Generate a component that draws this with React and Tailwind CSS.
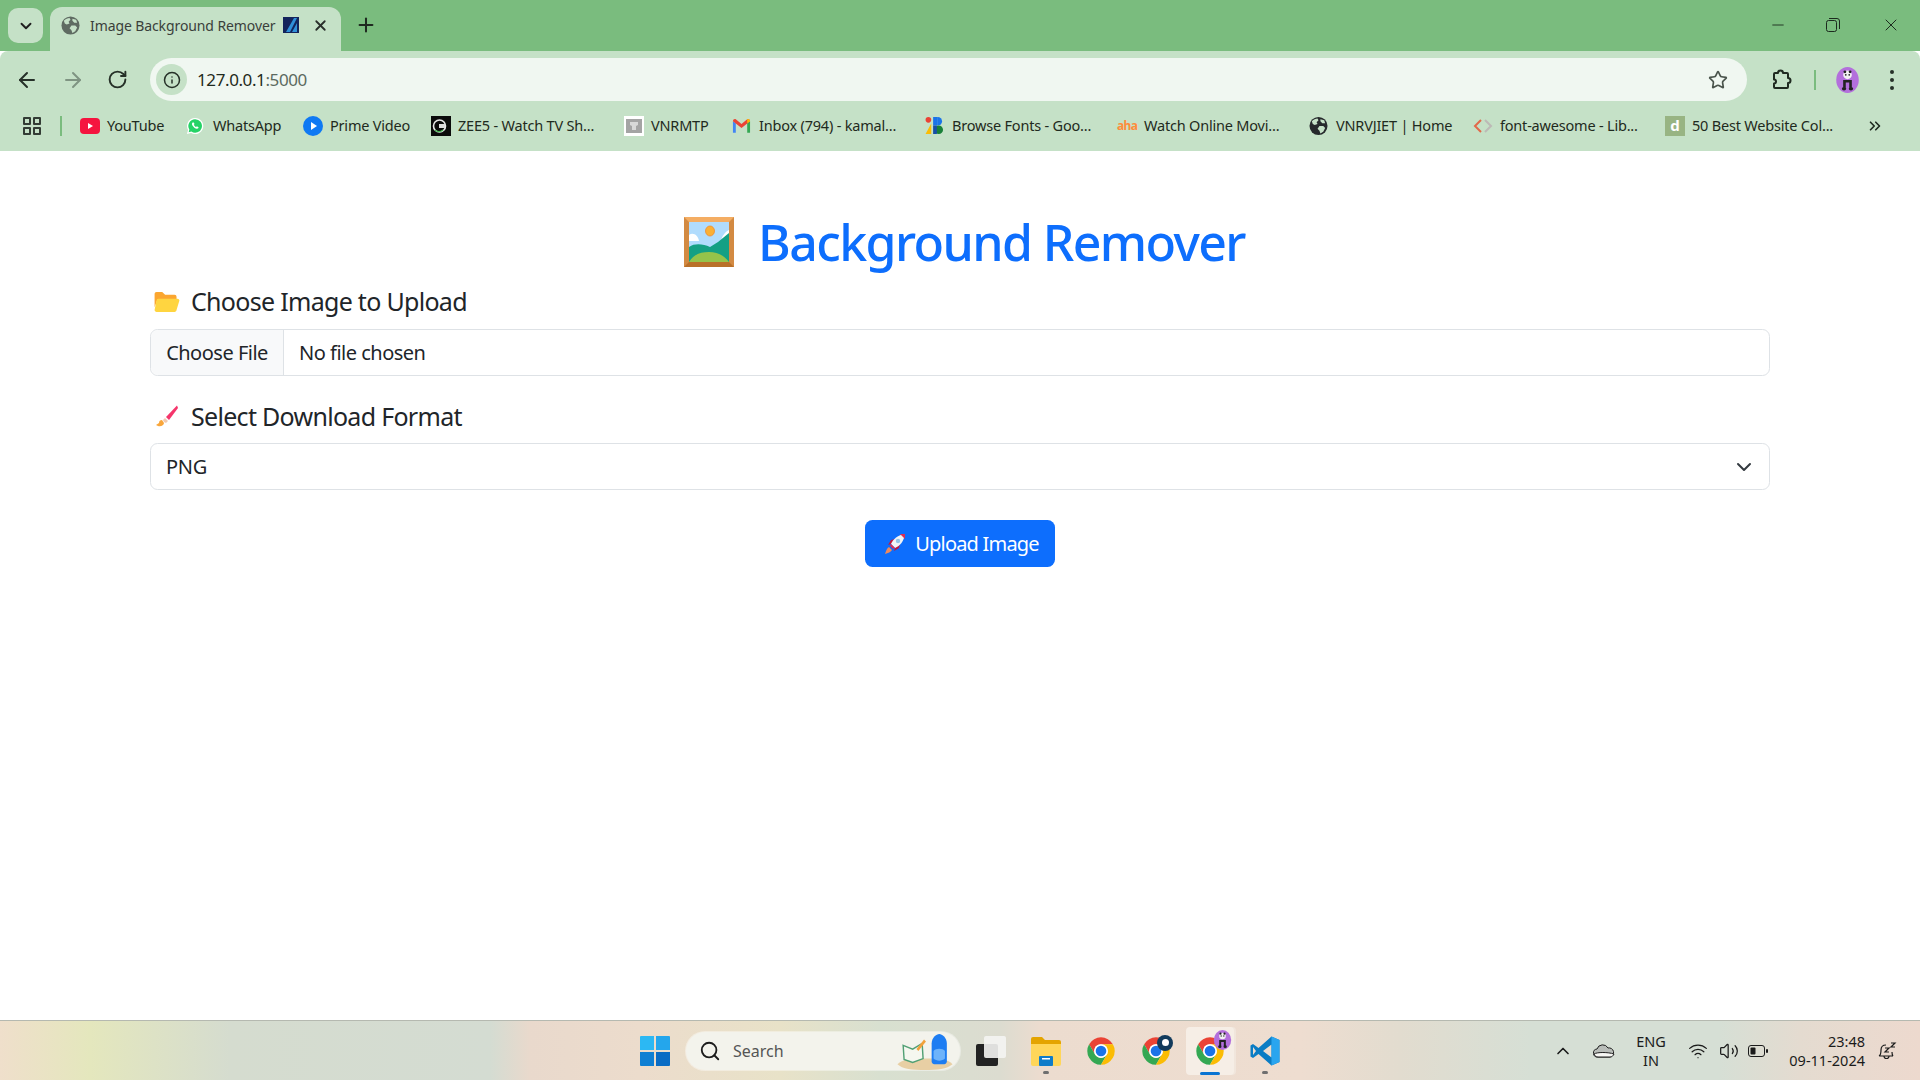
import React from 'react';
import { ArrowLeft, ArrowRight, RotateCw, Info, Star, ChevronDown, ChevronUp, ChevronsRight, Plus, X, Minus, Search, Wifi, Volume2 } from 'lucide-react';

const Globe = ({ className }) => (
  <svg viewBox="0 0 20 20" className={className}>
    <circle cx="10" cy="10" r="9.5" fill="currentColor" />
    <path d="M3 5c2-2 4-3 6-3l1 2-2 2 1 2-3 1-2-1zM11 10l4 0 2 2-2 4-3 2-1-3-2-2zM12 3l4 1 1 3-3 0-2-2z" fill="#c5e1c7" />
  </svg>
);

const Panda = ({ className }) => (
  <svg viewBox="0 0 26 30" className={className}>
    <ellipse cx="13" cy="15" rx="13" ry="15" fill="#b36fdc" />
    <circle cx="13" cy="9" r="5" fill="#f2f2f2" />
    <circle cx="10" cy="5.5" r="1.6" fill="#222" />
    <circle cx="16" cy="5.5" r="1.6" fill="#222" />
    <circle cx="11" cy="9" r="1" fill="#222" />
    <circle cx="15" cy="9" r="1" fill="#222" />
    <path d="M8 15h10v9h-3v-6h-4v6H8z" fill="#222" />
    <ellipse cx="9" cy="25" rx="2.5" ry="2" fill="#222" />
    <ellipse cx="17" cy="25" rx="2.5" ry="2" fill="#222" />
  </svg>
);

const Chrome = ({ className }) => (
  <svg viewBox="0 0 48 48" className={className}>
    <path d="M5 13A22 22 0 0 1 43 13H24A11 11 0 0 0 14.5 29.5Z" fill="#ea4335" />
    <path d="M5 13A22 22 0 0 0 24 46L33.5 29.5A11 11 0 0 1 14.5 29.5Z" fill="#34a853" />
    <path d="M43 13A22 22 0 0 1 24 46L33.5 29.5A11 11 0 0 0 24 13Z" fill="#fbbc04" />
    <circle cx="24" cy="24" r="11" fill="#fff" />
    <circle cx="24" cy="24" r="8.5" fill="#1a73e8" />
  </svg>
);

const bookmarks = [
  {
    name: 'YouTube',
    width: 'w-[106px]',
    icon: (
      <svg viewBox="0 0 20 16" className="h-4 w-5">
        <rect width="20" height="16" rx="4" fill="#f5143f" />
        <path d="M8 5l5 3-5 3z" fill="#fff" />
      </svg>
    ),
  },
  {
    name: 'WhatsApp',
    width: 'w-[117px]',
    icon: (
      <svg viewBox="0 0 20 20" className="h-5 w-[18px]">
        <path d="M10 1a9 9 0 0 0-7.7 13.5L1 19l4.7-1.2A9 9 0 1 0 10 1z" fill="#fff" />
        <path d="M10 2.5a7.5 7.5 0 0 0-6.3 11.4L3 17l3-.8A7.5 7.5 0 1 0 10 2.5z" fill="#25d366" />
        <path d="M7.3 6c-.9.8-1 2.2.3 4s3.2 3.3 4.7 3c1-.2 1.8-1 1.6-1.7l-1.8-1-.9.9c-1-.4-2-1.4-2.5-2.5l.8-.9-.9-1.8z" fill="#fff" />
      </svg>
    ),
  },
  {
    name: 'Prime Video',
    width: 'w-[128px]',
    icon: (
      <svg viewBox="0 0 20 20" className="h-5 w-5">
        <circle cx="10" cy="10" r="10" fill="#0f79f3" />
        <path d="M8 6l6 4-6 4z" fill="#fff" />
      </svg>
    ),
  },
  {
    name: 'ZEE5 - Watch TV Sh...',
    width: 'w-[193px]',
    icon: (
      <svg viewBox="0 0 20 20" className="h-5 w-5">
        <rect width="20" height="20" fill="#0b0b0b" />
        <circle cx="8.5" cy="10" r="6" fill="none" stroke="#e8e8e8" strokeWidth="1.6" />
        <path d="M4 14a6 6 0 0 0 8 0" fill="none" stroke="#46b450" strokeWidth="1.4" />
        <path d="M8 8h6v4H8z" fill="#ddd" />
      </svg>
    ),
  },
  {
    name: 'VNRMTP',
    width: 'w-[108px]',
    icon: (
      <svg viewBox="0 0 20 20" className="h-5 w-5">
        <rect width="20" height="20" fill="#fff" />
        <rect x="2" y="3" width="16" height="14" fill="#a4a4a4" />
        <path d="M6 6h8v3l-2 1v4H8v-4L6 9z" fill="#d8d8d8" />
      </svg>
    ),
  },
  {
    name: 'Inbox (794) - kamal...',
    width: 'w-[193px]',
    icon: (
      <svg viewBox="0 0 20 16" className="h-4 w-[19px]">
        <path d="M1 15V3l3 2v10z" fill="#4285f4" />
        <path d="M16 15V5l3-2v12z" fill="#34a853" />
        <path d="M1 3c0-2 2-3 3-2l6 5 6-5c1-1 3 0 3 2l-9 7z" fill="#ea4335" />
        <path d="M16 5l3-2c0-2-2-3-3-2z" fill="#fbbc04" />
      </svg>
    ),
  },
  {
    name: 'Browse Fonts - Goo...',
    width: 'w-[192px]',
    icon: (
      <svg viewBox="0 0 20 18" className="h-[17px] w-5">
        <circle cx="3" cy="3" r="3" fill="#ea4335" />
        <path d="M0 18L6 7v11z" fill="#fbbc04" />
        <path d="M8 0h5v9H8z" fill="#1a73e8" />
        <path d="M13 0a4.500 4.500 0 0 1 0 9z" fill="#1a73e8" />
        <circle cx="14" cy="13.500" r="4.500" fill="#188038" />
        <path d="M8 9h4v9H8z" fill="#174ea6" />
      </svg>
    ),
  },
  {
    name: 'Watch Online Movi...',
    width: 'w-[192px]',
    icon: <span className="text-[12px] font-bold leading-none tracking-[-0.6px] text-[#ff8c3a]">aha</span>,
  },
  {
    name: 'VNRVJIET | Home',
    width: 'w-[164px]',
    icon: <Globe className="h-5 w-[19px] text-[#26292c]" />,
  },
  {
    name: 'font-awesome - Lib...',
    width: 'w-[192px]',
    icon: (
      <svg viewBox="0 0 20 16" className="h-4 w-5" fill="none" strokeWidth="2">
        <path d="M8 2L2 8l6 6" stroke="#e2694a" />
        <path d="M12 2l6 6-6 6" stroke="#bdb9b6" />
      </svg>
    ),
  },
  {
    name: '50 Best Website Col...',
    width: 'w-[197px]',
    icon: (
      <div className="flex h-5 w-5 items-center justify-center bg-[#98b483] text-[15px] font-bold leading-none text-white">d</div>
    ),
  },
];

function FolderEmoji() {
  return (
    <svg viewBox="0 0 26 22" className="h-[21px] w-[26px]">
      <path d="M0 3a2 2 0 0 1 2-2h6l3 3h10a2 2 0 0 1 2 2v3H3l-3 8z" fill="#fba630" />
      <path d="M4 8h20c1 0 2 1 2 2l-3 10c0 1-1 2-2 2H2c-1 0-2-1-2-2l2-10c0-1 1-2 2-2z" fill="#ffd540" />
    </svg>
  );
}

function BrushEmoji() {
  return (
    <svg viewBox="0 0 24 22" className="h-[22px] w-6">
      <path d="M23 .5L12 12l3 3L24 3z" fill="#f5356b" />
      <path d="M11 13l-2 2 1 2 2 1 2-2z" fill="#f0c9b0" />
      <path d="M8 15c-2 0-3 1-3 3l-3 2 2 1c3 1 6-1 6-3z" fill="#f9a63a" />
    </svg>
  );
}

function PictureEmoji() {
  return (
    <svg viewBox="0 0 50 50" preserveAspectRatio="none" className="h-[50px] w-[50px]">
      <rect width="50" height="50" fill="#d38a42" />
      <path d="M0 0h50l-5 5H5z" fill="#f4ad63" />
      <path d="M0 50h50l-5-5H5z" fill="#b97029" />
      <rect x="5" y="5" width="40" height="40" fill="#b1dcfd" />
      <path d="M5 18c4-3 9 0 10 6H5zM45 13v8l-8 3c1-5 4-9 8-11z" fill="#fff" />
      <ellipse cx="26" cy="14" rx="4.500" ry="5" fill="#fbb034" stroke="#f08c2c" strokeWidth="0.800" />
      <path d="M5 30c6-4 14-3 21 0l8-5 11-9v29H5z" fill="#14a084" />
      <path d="M5 45c5-8 12-10 20-10s15 3 20 10z" fill="#95c34a" />
    </svg>
  );
}

function RocketEmoji() {
  return (
    <svg viewBox="0 0 20 20" className="h-5 w-5">
      <path d="M6 10l-3 1 3-5 4-1z" fill="#c4173c" />
      <path d="M10 14l-1 3 5-3 1-4z" fill="#c4173c" />
      <path d="M6 10C8 5 13 1 20 0c-1 7-5 12-10 14z" fill="#f3f4f6" />
      <path d="M6 10l4 4-2 1-3-3z" fill="#dc2f55" />
      <path d="M15 0l5 0 0 5z" fill="#dc2f55" />
      <circle cx="13" cy="7" r="2.200" fill="#93c5e8" />
      <path d="M4 13l3 3c-1 2-4 3-7 4 1-3 2-6 4-7z" fill="#f08a5d" />
    </svg>
  );
}

function TaskbarApps() {
  return (
    <div className="flex items-center">
      {/* Start */}
      <svg viewBox="0 0 30 30" className="ml-[640px] h-[30px] w-[30px]">
        <path d="M0 1a1 1 0 0 1 1-1h13v14H0z" fill="#2cb8f3" />
        <path d="M16 0h13a1 1 0 0 1 1 1v13H16z" fill="#24a6ec" />
        <path d="M0 16h14v14H1a1 1 0 0 1-1-1z" fill="#0f7fd3" />
        <path d="M16 16h14v13a1 1 0 0 1-1 1H16z" fill="#0a6cc4" />
      </svg>

      {/* Search */}
      <div className="ml-4 flex h-[38px] w-[274px] items-center rounded-full bg-[#f3f3ec] pl-[13px] shadow-[0_0_0_1px_rgba(255,255,255,0.4)]">
        <Search className="h-[22px] w-[22px] text-[#1c1c1c]" strokeWidth={2} />
        <span className="ml-[12px] text-[16px] text-[#555]">Search</span>
        <svg viewBox="0 0 58 40" className="ml-auto mr-[6px] h-[38px] w-[58px]">
          <path d="M0 34c6-5 12-6 29-6s24 1 29 6c-6 5-16 6-29 6S5 39 0 34z" fill="#e8cfa4" />
          <path d="M6 14l10 4 10-6 1 16-11 4-9-3z" fill="#f5f7ef" stroke="#51a074" strokeWidth="1.500" />
          <path d="M20 18l8-10 2 2-8 10z" fill="#f2a13a" />
          <path d="M36 12c0-6 5-10 8-10s8 4 8 10v19c0 2-2 3-4 3h-8c-2 0-4-1-4-3z" fill="#1d7df2" />
          <path d="M38 20c2-3 10-3 12 0v8c-3 3-9 3-12 0z" fill="#6db3fa" />
        </svg>
      </div>

      {/* Task view */}
      <div className="relative ml-4 h-[30px] w-[30px]">
        <div className="absolute bottom-0 left-0 h-[22px] w-[22px] rounded-[2px] bg-[#222]" />
        <div className="absolute right-0 top-0 h-[22px] w-[22px] rounded-[2px] bg-[#f4f4f2]/90" />
      </div>

      {/* Explorer */}
      <div className="relative ml-[25px] h-[30px] w-[30px]">
        <svg viewBox="0 0 30 30" className="h-[30px] w-[30px]">
          <path d="M0 3a2 2 0 0 1 2-2h9l3 3h14a2 2 0 0 1 2 2v20H0z" fill="#e4a400" />
          <path d="M0 8h30v20a2 2 0 0 1-2 2H2a2 2 0 0 1-2-2z" fill="#ffd659" />
          <rect x="8" y="20" width="14" height="10" rx="1" fill="#0f7cc9" />
          <rect x="11" y="22" width="8" height="1.500" fill="#fff" />
        </svg>
        <div className="absolute -bottom-2 left-[12px] h-[3px] w-[6px] rounded-full bg-[#6f6f6f]" />
      </div>

      <Chrome className="ml-[25px] h-[30px] w-[30px]" />

      <div className="relative ml-[25px] h-[30px] w-[30px]">
        <Chrome className="h-[30px] w-[30px]" />
        <div className="absolute -right-[2px] -top-px flex h-4 w-4 items-center justify-center rounded-full bg-[#113a5c]">
          <div className="h-[7px] w-[7px] rounded-full bg-white" />
        </div>
      </div>

      {/* Active chrome window */}
      <div className="relative ml-[15px] flex h-12 w-[48px] items-center justify-center rounded-[4px] bg-[#f6eee6] shadow-[2px_0_0_#f1e6dc]">
        <Chrome className="h-[30px] w-[30px]" />
        <Panda className="absolute right-[2px] top-[3px] h-[20px] w-[19px]" />
        <div className="absolute bottom-0 left-[14px] h-[3px] w-[20px] rounded-full bg-[#0a74d2]" />
      </div>

      {/* VS Code */}
      <div className="relative ml-[16px] h-[30px] w-[30px]">
        <svg viewBox="0 0 30 30" className="h-[30px] w-[30px]">
          <path fillRule="evenodd" d="M21.500.5L8.500 12 3 8 .5 9.500v11L3 22l5.500-4 13 11.500 8-3.500V4zM21.500 8.500L13 15l8.500 6.500zM3 11l3 4-3 4z" fill="#0a7cc4" />
          <path d="M21.500.5l8 3.500v22l-8 3.500z" fill="#2aa5ef" />
        </svg>
        <div className="absolute -bottom-2 left-[12px] h-[3px] w-[6px] rounded-full bg-[#6f6f6f]" />
      </div>
    </div>
  );
}

function Tray() {
  return (
    <div className="mr-[22px] flex items-center text-[#1b1b1b]">
      <ChevronUp className="h-5 w-5" strokeWidth={2} />
      <svg viewBox="0 0 22 14" className="ml-[20px] h-[14px] w-[22px]">
        <path d="M5 13a4 4 0 0 1-1-8 6 6 0 0 1 11-1 4.500 4.500 0 0 1 2 9z" fill="#b9bdb9" stroke="#1f1f1f" strokeWidth="1" />
        <path d="M1 10c3-2 14-2 20 0-1 2-2 3-4 3H5c-2 0-3-1-4-3z" fill="#f7f7f4" stroke="#1f1f1f" strokeWidth="1" />
      </svg>
      <div className="ml-[12px] flex w-[48px] flex-col items-center text-[14.500px] leading-[19px]">
        <span>ENG</span>
        <span>IN</span>
      </div>
      <Wifi className="ml-[12px] h-[20px] w-[22px]" strokeWidth={1.500} />
      <Volume2 className="ml-[10px] h-[20px] w-[20px]" strokeWidth={1.500} />
      <svg viewBox="0 0 20 12" className="ml-[9px] h-3 w-5">
        <rect x="0.500" y="0.500" width="16" height="11" rx="2.500" fill="none" stroke="#1b1b1b" />
        <rect x="2.500" y="2.500" width="5" height="7" rx="1" fill="#1b1b1b" />
        <rect x="18" y="4" width="2" height="4" rx="1" fill="#1b1b1b" />
      </svg>
      <div className="ml-[7px] flex w-[90px] flex-col items-end text-[14.500px] leading-[19px]">
        <span>23:48</span>
        <span>09-11-2024</span>
      </div>
      <svg viewBox="0 0 20 20" className="ml-[13px] h-5 w-5" fill="none" stroke="#1b1b1b" strokeWidth="1.200">
        <path d="M1 15c2-1 2-3 2-6 0-3 2-5 5-5M8 15H1M15 15c-1-1-1-2-1-4M1 15h14" />
        <path d="M6 15a2.500 2.500 0 0 0 5 0" />
        <path d="M7 7h4l-4 4h4M13 2h4l-4 4h4" />
      </svg>
    </div>
  );
}

export default function App() {
  return (
    <div className="flex h-screen flex-col overflow-hidden bg-white font-['Noto_Sans','Open_Sans',sans-serif] text-[#212529]">
      {/* Tab strip */}
      <div className="flex h-[51px] flex-none items-end bg-[#7abc7e]">
        <div className="mb-[8px] ml-2 flex h-[35px] w-[35px] items-center justify-center rounded-[10px] bg-[#c5e1c7] text-[#1f1f1f]">
          <ChevronDown className="h-[18px] w-[18px]" strokeWidth={2.500} />
        </div>
        <div className="ml-[7px] flex h-[44px] w-[291px] items-center rounded-t-[12px] bg-[#c5e1c7] pb-2 pl-[11px]">
          <Globe className="h-[19px] w-[19px] text-[#5f6b62]" />
          <span className="ml-[10px] whitespace-nowrap text-[14px] tracking-[-0.1px] text-[#3a3f3b]">Image Background Remover</span>
          <svg viewBox="0 0 16 16" className="ml-auto h-4 w-4">
            <rect width="16" height="16" fill="#13245c" />
            <path d="M3 15L11 1h3L7 15zM9 15l5-9v9z" fill="#2f8fd8" />
          </svg>
          <X className="ml-[13px] mr-[12px] h-[17px] w-[17px] text-[#2a2e2b]" strokeWidth={2.500} />
        </div>
        <Plus className="mb-[15px] ml-[14px] h-[22px] w-[22px] text-[#1f2a20]" strokeWidth={2.200} />
        <div className="mb-[16px] ml-auto flex items-center text-[#1c2a1e]">
          <Minus className="h-[18px] w-[18px]" strokeWidth={1.200} />
          <svg viewBox="0 0 16 16" className="ml-[38px] h-4 w-4" fill="none" stroke="currentColor" strokeWidth="1">
            <rect x="1.500" y="3.500" width="10" height="11" rx="2" />
            <path d="M4 1.500h8a2.500 2.500 0 0 1 2.500 2.500v8" />
          </svg>
          <X className="ml-[40px] mr-[19px] h-5 w-5" strokeWidth={1.200} />
        </div>
      </div>

      {/* Toolbar */}
      <div className="flex h-[100px] flex-none flex-col rounded-t-[8px] bg-[#c5e1c7]">
        <div className="mt-[7px] flex h-[43px] items-center">
          <ArrowLeft className="ml-[15px] h-6 w-6 text-[#263028]" strokeWidth={2} />
          <ArrowRight className="ml-[22px] h-6 w-6 text-[#7f9482]" strokeWidth={2} />
          <RotateCw className="ml-[22px] h-[21px] w-[21px] text-[#263028]" strokeWidth={2.200} />
          <div className="ml-[22px] flex h-[43px] w-[1597px] items-center rounded-full bg-[#f0f7f1] pl-[6px]">
            <div className="flex h-[31px] w-[31px] items-center justify-center rounded-full bg-[#c5e1c7]">
              <Info className="h-[18px] w-[18px] text-[#263028]" strokeWidth={2} />
            </div>
            <span className="ml-[10px] text-[17px] tracking-[-0.4px] text-[#1f2a20]">
              127.0.0.1<span className="text-[#5c6a5f]">:5000</span>
            </span>
            <Star className="ml-auto mr-[19px] h-5 w-5 text-[#4a544c]" strokeWidth={2} />
          </div>
          <svg viewBox="0 0 24 24" className="ml-[22px] h-[24px] w-[24px] text-[#1f2a20]" fill="none" stroke="currentColor" strokeWidth="2" strokeLinejoin="round">
            <path d="M9 5a2.500 2.500 0 0 1 5 0h4a1 1 0 0 1 1 1v4a2.500 2.500 0 0 1 0 5v4a1 1 0 0 1-1 1H6a1 1 0 0 1-1-1v-3.500a2 2 0 0 0 0-4V6a1 1 0 0 1 1-1z" />
          </svg>
          <div className="ml-[21px] h-5 w-0.5 bg-[#7abc7e]" />
          <Panda className="ml-[19px] h-[26px] w-[25px]" />
          <div className="ml-[30px] flex flex-col gap-[4px]">
            <div className="h-1 w-1 rounded-full bg-[#263028]" />
            <div className="h-1 w-1 rounded-full bg-[#263028]" />
            <div className="h-1 w-1 rounded-full bg-[#263028]" />
          </div>
        </div>

        {/* Bookmarks */}
        <div className="mt-[5px] flex h-[39px] items-center">
          <div className="ml-[23px] grid h-[18px] w-[18px] grid-cols-2 gap-[2px]">
            <div className="rounded-[1px] border-2 border-[#333c35]" />
            <div className="rounded-[1px] border-2 border-[#333c35]" />
            <div className="rounded-[1px] border-2 border-[#333c35]" />
            <div className="rounded-[1px] border-2 border-[#333c35]" />
          </div>
          <div className="ml-[19px] h-5 w-0.5 bg-[#7abc7e]" />
          <div className="ml-[18px] flex items-center">
            {bookmarks.map((item) => (
              <div key={item.name} className={`flex items-center ${item.width}`}>
                <div className="flex w-[27px] flex-none items-center">{item.icon}</div>
                <span className="whitespace-nowrap text-[14.500px] tracking-[-0.2px] text-[#1f2a20]">{item.name}</span>
              </div>
            ))}
          </div>
          <ChevronsRight className="ml-[4px] h-[18px] w-[18px] text-[#1f2a20]" strokeWidth={2.200} />
        </div>
      </div>

      {/* Page */}
      <main className="mx-auto w-[1620px] flex-1 pt-[61px]">
        <h1 className="mb-[14px] flex items-center justify-center pl-[9px] text-[50px] font-medium leading-[60px] tracking-[-1.6px] text-[#0d6efd]">
          <PictureEmoji />
          <span className="ml-[24px]">Background Remover</span>
        </h1>

        <label className="mb-[13px] flex h-[30px] items-center text-[25px] leading-[30px] tracking-[-0.7px]">
          <div className="ml-[4px] flex w-[37px] items-center"><FolderEmoji /></div>
          Choose Image to Upload
        </label>
        <div className="flex h-[47px] items-center rounded-[7.5px] border border-[#dee2e6] text-[20px] tracking-[-0.5px]">
          <div className="flex h-full w-[133px] items-center justify-center rounded-l-[7.5px] border-r border-[#dee2e6] bg-[#f8f9fa]">Choose File</div>
          <span className="ml-[15px]">No file chosen</span>
        </div>

        <label className="mb-[12px] mt-[25px] flex h-[30px] items-center text-[25px] leading-[30px] tracking-[-0.7px]">
          <div className="ml-[4px] flex w-[37px] items-center"><BrushEmoji /></div>
          Select Download Format
        </label>
        <div className="flex h-[47px] items-center justify-between rounded-[7.5px] border border-[#dee2e6] pl-[15px] pr-[13px] text-[20px] tracking-[-0.3px]">
          PNG
          <ChevronDown className="h-6 w-6 text-[#343a40]" strokeWidth={2} />
        </div>

        <div className="mt-[30px] flex justify-center">
          <button className="flex h-[47px] w-[190px] items-center justify-center rounded-[7.5px] bg-[#0d6efd] pl-1 text-[20px] tracking-[-0.8px] text-white">
            <RocketEmoji />
            <span className="ml-[10px]">Upload Image</span>
          </button>
        </div>
      </main>

      {/* Taskbar */}
      <footer className="flex h-[60px] flex-none items-center justify-between border-t border-[#b5b9b0] bg-[linear-gradient(90deg,#efdfcb_0,#e4e7bd_90px,#d5dccf_230px,#d4dcd2_490px,#e9d9cc_530px,#ecdccc_640px,#e8e2c8_780px,#d8e0d0_880px,#dcdcd0_1000px,#ecdccf_1040px,#eeddd0_1300px,#e2dccf_1400px,#d6dfd5_1530px,#d6dfd5_1720px,#e4dbd0_1800px,#edd9ce_1920px)]">
        <TaskbarApps />
        <Tray />
      </footer>
    </div>
  );
}
